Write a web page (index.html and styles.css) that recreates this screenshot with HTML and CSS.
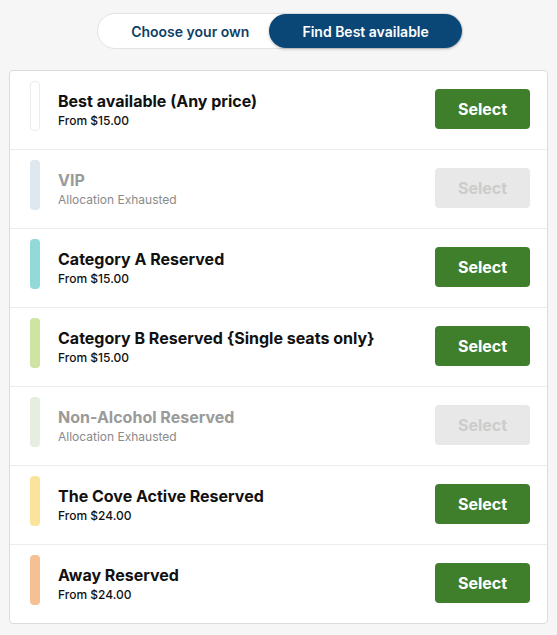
FILE: index.html
```html
<!DOCTYPE html>
<html lang="en">
<head>
    <meta charset="UTF-8">
    <meta name="viewport" content="width=device-width, initial-scale=1.0">
    <title>Select tickets</title>
    <link rel="stylesheet" href="styles.css">
</head>
<body>
    <div class="toggle-wrap">
        <div class="toggle">
            <button class="toggle-btn first">Choose your own</button>
            <button class="toggle-btn active">Find Best available</button>
        </div>
    </div>

    <div class="card">
        <div class="row">
            <span class="bar bar-best"></span>
            <div class="info">
                <div class="title">Best available (Any price)</div>
                <div class="sub">From $15.00</div>
            </div>
            <button class="select-btn">Select</button>
        </div>
        <div class="row disabled">
            <span class="bar bar-vip"></span>
            <div class="info">
                <div class="title">VIP</div>
                <div class="sub">Allocation Exhausted</div>
            </div>
            <button class="select-btn" disabled>Select</button>
        </div>
        <div class="row">
            <span class="bar bar-cat-a"></span>
            <div class="info">
                <div class="title">Category A Reserved</div>
                <div class="sub">From $15.00</div>
            </div>
            <button class="select-btn">Select</button>
        </div>
        <div class="row">
            <span class="bar bar-cat-b"></span>
            <div class="info">
                <div class="title">Category B Reserved {Single seats only}</div>
                <div class="sub">From $15.00</div>
            </div>
            <button class="select-btn">Select</button>
        </div>
        <div class="row disabled">
            <span class="bar bar-non-alc"></span>
            <div class="info">
                <div class="title">Non-Alcohol Reserved</div>
                <div class="sub">Allocation Exhausted</div>
            </div>
            <button class="select-btn" disabled>Select</button>
        </div>
        <div class="row">
            <span class="bar bar-cove"></span>
            <div class="info">
                <div class="title">The Cove Active Reserved</div>
                <div class="sub">From $24.00</div>
            </div>
            <button class="select-btn">Select</button>
        </div>
        <div class="row">
            <span class="bar bar-away"></span>
            <div class="info">
                <div class="title">Away Reserved</div>
                <div class="sub">From $24.00</div>
            </div>
            <button class="select-btn">Select</button>
        </div>
    </div>
</body>
</html>
```

FILE: styles.css
```css
body {
    font-family: Inter, "Noto Sans", sans-serif;
    background-color: #f6f6f6;
    color: #111111;
    margin: 0;
    padding: 13px 9px 0;
}

.toggle-wrap {
    display: flex;
    justify-content: center;
    padding-left: 3px;
    margin-bottom: 21px;
}

.toggle {
    display: flex;
    background: #ffffff;
    border: 1px solid #e2e2e2;
    border-radius: 18px;
    height: 34px;
    padding: 0;
}

.toggle-btn {
    font-family: inherit;
    font-size: 14px;
    font-weight: 600;
    border: none;
    background: transparent;
    color: #0f3f66;
    padding: 0 20px 0 33px;
    cursor: pointer;
    border-radius: 17px;
}

.toggle-btn.active {
    background: #0a4777;
    color: #ffffff;
    padding: 0 33px;
    margin: 0;
    box-shadow: 0 1px 3px rgba(0, 0, 0, 0.25);
}

.card {
    background: #ffffff;
    border: 1px solid #dcdcdc;
    border-radius: 4px;
}

.row {
    display: flex;
    align-items: center;
    height: 58px;
    padding: 10px 17px 10px 20px;
    border-bottom: 1px solid #ececec;
}

.row:last-child {
    border-bottom: none;
}

.bar {
    align-self: flex-start;
    width: 10px;
    height: 50px;
    border-radius: 4px;
    margin-right: 18px;
    flex-shrink: 0;
}

.bar-best {
    background: #ffffff;
    border: 1px solid #ececec;
    width: 8px;
    height: 48px;
}

.bar-vip { background: #dfe7ef; }
.bar-cat-a { background: #93d9d8; }
.bar-cat-b { background: #cfe3a2; }
.bar-non-alc { background: #e6ede1; }
.bar-cove { background: #fae49c; }
.bar-away { background: #f5c093; }

.info {
    flex: 1;
}

.title {
    font-size: 16px;
    font-weight: 700;
    line-height: 20px;
}

.sub {
    font-size: 12px;
    font-weight: 500;
    line-height: 16px;
    margin-top: 2px;
}

.disabled .title {
    color: #9a9a9a;
}

.disabled .sub {
    color: #8a8a8a;
    font-weight: 400;
}

.select-btn {
    font-family: inherit;
    width: 95px;
    height: 40px;
    margin-bottom: 2px;
    border: none;
    border-radius: 4px;
    background: #3f7f2b;
    color: #ffffff;
    font-size: 16px;
    font-weight: 700;
    cursor: pointer;
}

.select-btn:disabled {
    background: #e8e8e8;
    color: #cccccc;
    cursor: default;
}
```
